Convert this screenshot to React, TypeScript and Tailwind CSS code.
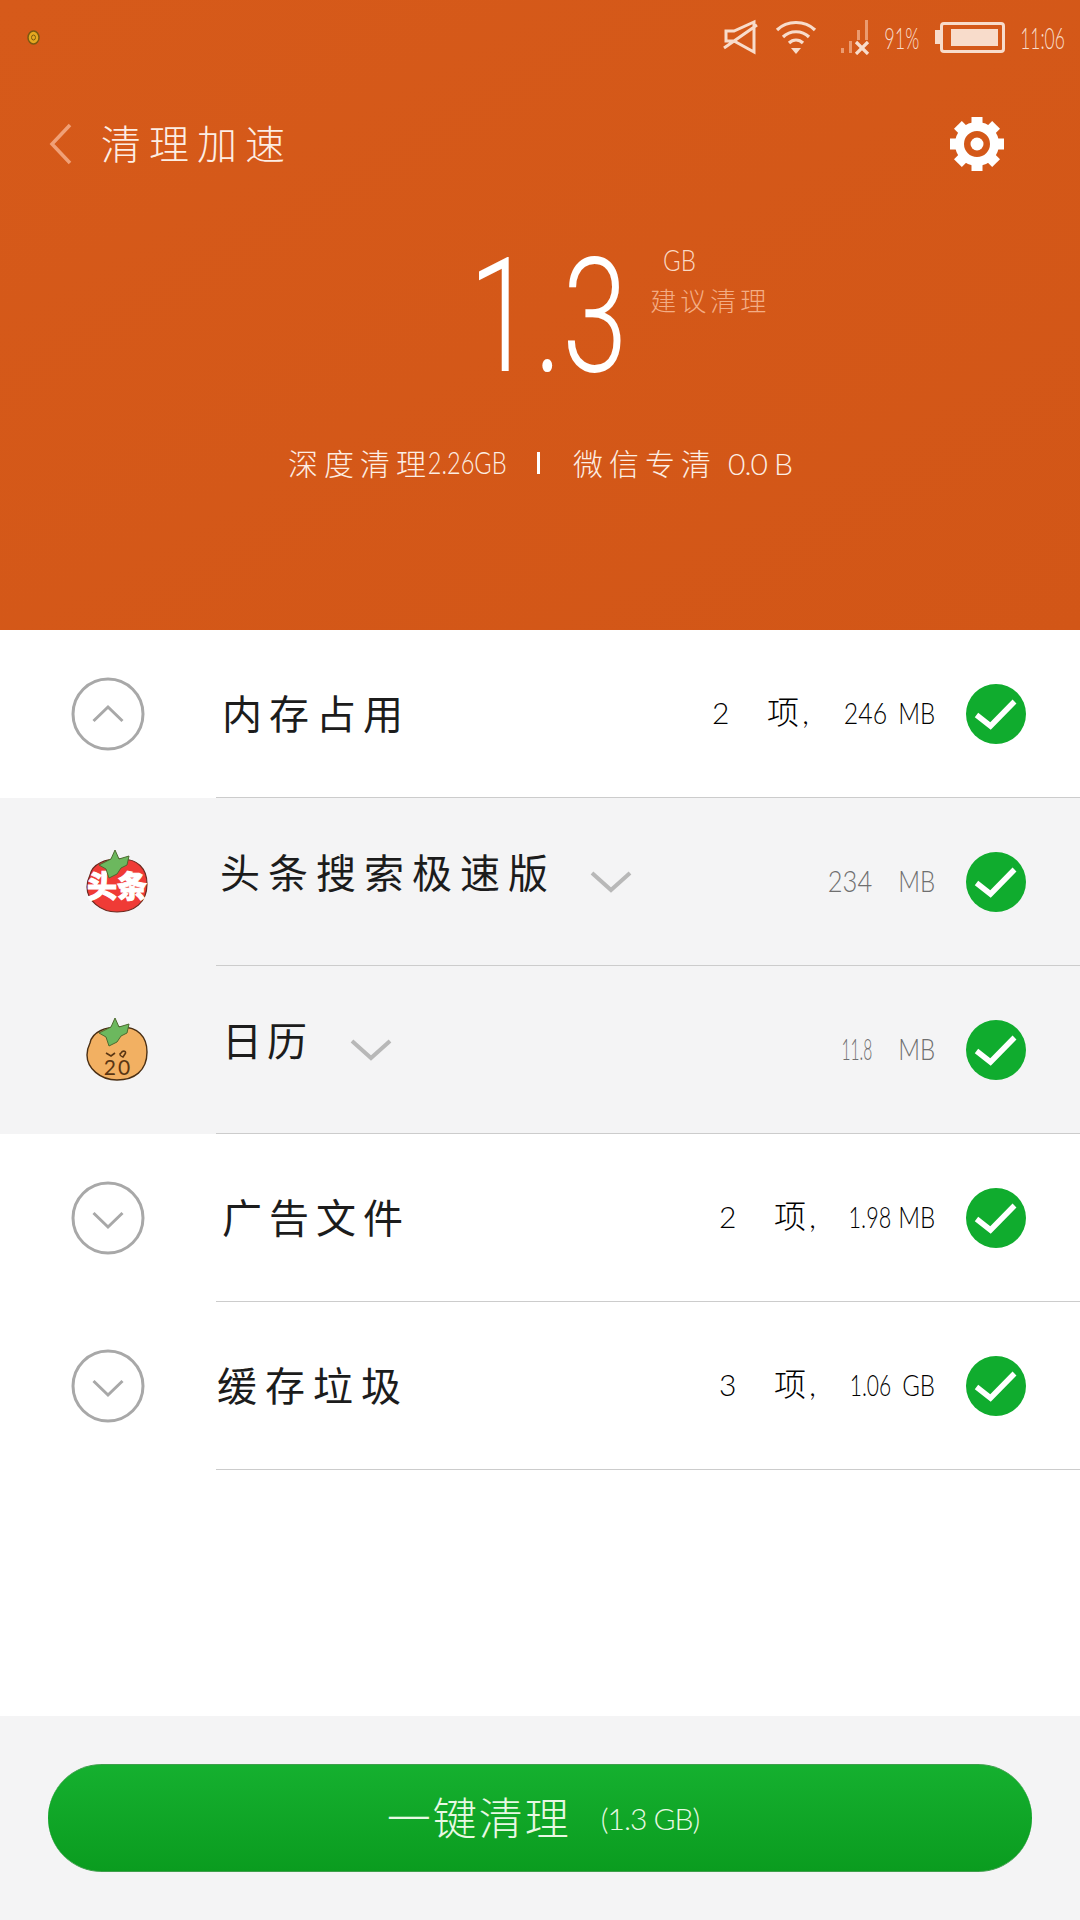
import React from 'react';

const Check = () => (
  <svg width="60" height="60" viewBox="0 0 60 60" className="shrink-0">
    <circle cx="30" cy="30" r="30" fill="#10ac2e" />
    <path d="M10.5 31 L24.5 42 L48.5 17.5" fill="none" stroke="#fff" strokeWidth="5.5" />
  </svg>
);

const CircleChevron = ({ up }: { up?: boolean }) => (
  <svg width="74" height="74" viewBox="0 0 74 74">
    <circle cx="37" cy="37" r="35" fill="none" stroke="#a8a8a8" strokeWidth="3" />
    <path d={up ? 'M22.5 44 L37 30 L51.5 44' : 'M22.5 32 L37 46 L51.5 32'} fill="none" stroke="#a8a8a8" strokeWidth="3" />
  </svg>
);

const SmallChevron = () => (
  <svg width="42" height="24" viewBox="0 0 42 24" className="shrink-0">
    <path d="M2 3 L21 20 L40 3" fill="none" stroke="#b8b8b8" strokeWidth="4" />
  </svg>
);

const Leaf = () => (
  <path
    d="M31 3 L35 12 L45 9 L43 18 L37 21 L33 27 L25 31 L22 22 L15 18 L27 12 Z"
    fill="#6cb85e"
    stroke="#4d6b2f"
    strokeWidth="1"
  />
);

const BODY = 'M6 28 C8 17 22 11 38 12 C53 12 63 21 63 37 C63 56 50 65 33 65 C16 65 3 53 3 40 C3 35 4 32 6 28 Z';

const TomatoRed = () => (
  <svg width="66" height="70" viewBox="0 0 66 70">
    <path d={BODY} fill="#ef3b36" stroke="#6b2a20" strokeWidth="1.2" />
    <text x="3" y="50" fontSize="30" fontWeight="900" fill="#fff" stroke="#fff" strokeWidth="1" fontFamily="'Noto Sans CJK SC', sans-serif">头条</text>
    <Leaf />
  </svg>
);

const TomatoOrange = () => (
  <svg width="66" height="70" viewBox="0 0 66 70">
    <path d={BODY} fill="#f2b062" stroke="#4a2f14" strokeWidth="1.4" />
    <Leaf />
    <text x="34" y="60" textAnchor="middle" fontSize="21" letterSpacing="2" fontWeight="400" fill="#5a3613" fontFamily="'Lato', sans-serif">20</text>
    <path d="M22 38 L27 41 L31 38 M37 38 C39 35 43 36 41 39 L39 42 C36 41 35 39 37 38 Z" fill="none" stroke="#5a3613" strokeWidth="1.6" />
  </svg>
);

const Gear = () => (
  <svg width="56" height="56" viewBox="0 0 56 56">
    {[0, 45, 90, 135, 180, 225, 270, 315].map((a) => (
      <rect key={a} x="22.5" y="1" width="11" height="12" fill="#fff" transform={`rotate(${a} 28 28)`} />
    ))}
    <circle cx="28" cy="28" r="17.5" fill="none" stroke="#fff" strokeWidth="9" />
    <circle cx="28" cy="28" r="6.5" fill="#fff" />
  </svg>
);

// the reference's digits are much narrower than any installed face, so squeeze them
const Narrow = ({ w, cls, children }: { w: string; cls: string; children: React.ReactNode }) => (
  <span className={`flex justify-end shrink-0 ${w}`}>
    <span className={`shrink-0 whitespace-nowrap origin-right ${cls}`}>{children}</span>
  </span>
);

const StatusIcons = () => (
  <div className="flex items-center text-[#f8dccb]">
    <svg width="36" height="36" viewBox="0 0 36 36" className="mr-[16px]">
      <path d="M3 12 H11 L31 3 V33 L11 22 H3 Z M1 29 L34 6" fill="none" stroke="#f8dccb" strokeWidth="3" />
    </svg>
    <svg width="42" height="36" viewBox="0 0 42 36" className="mr-[24px]">
      <path d="M2 11 C12 1 30 1 40 11 M8 18 C15 11 27 11 34 18 M14 24 C18 20 24 20 28 24" fill="none" stroke="#f8dccb" strokeWidth="3.2" />
      <path d="M16 29 H26 L21 35 Z" fill="#f8dccb" />
    </svg>
    <svg width="30" height="36" viewBox="0 0 30 36" className="mr-[14px]">
      <rect x="0" y="29" width="3" height="5" fill="#eb9b70" />
      <rect x="8" y="22" width="3" height="12" fill="#eb9b70" />
      <rect x="16" y="11" width="3" height="10" fill="#eb9b70" />
      <rect x="24" y="1" width="3" height="20" fill="#eb9b70" />
      <path d="M15 23 L27 35 M27 23 L15 35" stroke="#f8dccb" strokeWidth="3.2" />
    </svg>
    <Narrow w="w-[34px]" cls="text-[30px] leading-none font-light scale-x-[0.6]">91%</Narrow>
    <div className="relative flex items-center ml-[16px] mr-[15px]">
      <div className="w-[5px] h-[14px] bg-[#f8dccb]" />
      <div className="w-[65px] h-[31px] rounded-[4px] border-[3px] border-[#f8dccb] p-[4px] pl-[8px]">
        <div className="w-full h-full bg-[#f8dccb]" />
      </div>
    </div>
    <Narrow w="w-[45px]" cls="text-[30px] leading-none font-light scale-x-[0.58]">11:06</Narrow>
  </div>
);

interface RowProps {
  left: React.ReactNode;
  title: string;
  titleClass?: string;
  leftClass?: string;
  chevron?: boolean;
  gray?: boolean;
  right: React.ReactNode;
}

const Row: React.FC<RowProps> = ({ left, title, titleClass = '', leftClass = '', chevron, gray, right }) => (
  <div className={`flex h-[168px] ${gray ? 'bg-[#f4f4f5]' : 'bg-white'}`}>
    <div className={`w-[216px] shrink-0 flex items-center justify-center ${leftClass}`}>{left}</div>
    <div className="flex-1 flex items-center border-b-[1.5px] border-[#cccccc] pr-[54px]">
      <span className={`text-[40px] leading-none font-normal text-[#1c1c1c] ${titleClass}`}>{title}</span>
      {chevron && <div className="ml-[34px]"><SmallChevron /></div>}
      <div className="flex-1 flex items-center justify-end mr-[31px] mt-[-3px]">{right}</div>
      <Check />
    </div>
  </div>
);

interface CountProps {
  n: string;
  size: string;
  sizeW: string;
  sizeCls: string;
  sizeGap: string;
  unitGap: string;
  unit: string;
}

const Count = ({ n, size, sizeW, sizeCls, sizeGap, unitGap, unit }: CountProps) => (
  <div className="flex items-center text-[#000000] text-[30px] leading-none font-light">
    <span className="w-[15px]">{n}</span>
    <span className="ml-[40px] text-[32px] w-[40px] tracking-[3px] whitespace-nowrap">项,</span>
    <span className={sizeGap}><Narrow w={sizeW} cls={sizeCls}>{size}</Narrow></span>
    <span className={unitGap}><Narrow w="w-[34px]" cls="scale-x-[0.8]">{unit}</Narrow></span>
  </div>
);

const Size = ({ size, sizeW, sizeCls }: { size: string; sizeW: string; sizeCls: string }) => (
  <div className="flex items-center text-[#6f6f6f] text-[30px] leading-none font-light">
    <Narrow w={sizeW} cls={sizeCls}>{size}</Narrow>
    <span className="ml-[29px]"><Narrow w="w-[34px]" cls="scale-x-[0.8]">MB</Narrow></span>
  </div>
);

export default function App() {
  return (
    <div className="w-[1080px] h-[1920px] flex flex-col bg-white overflow-hidden font-['Lato','Noto_Sans_CJK_SC',sans-serif]">
      <div className="h-[630px] shrink-0 flex flex-col bg-gradient-to-br from-[#d65a1a] to-[#d25617] text-white">
        <div className="flex items-center justify-between h-[73px] pt-[1px] pl-[27px] pr-[15px]">
          <svg width="13" height="15" viewBox="0 0 13 15">
            <ellipse cx="6.5" cy="7.5" rx="5.5" ry="6.5" fill="#e6a820" stroke="#7a5a10" strokeWidth="1.5" />
            <ellipse cx="6.5" cy="7.5" rx="2" ry="2.5" fill="none" stroke="#7a5a10" strokeWidth="1" />
          </svg>
          <StatusIcons />
        </div>
        <div className="flex items-center h-[142px] pl-[48px] pr-[75px]">
          <svg width="24" height="42" viewBox="0 0 24 42" className="shrink-0">
            <path d="M22 2 L4 21 L22 40" fill="none" stroke="#f0a077" strokeWidth="3.5" />
          </svg>
          <span className="ml-[29px] text-[40px] leading-none tracking-[8px] font-light text-[#fdeee4]">清理加速</span>
          <div className="ml-auto"><Gear /></div>
        </div>
        <div className="flex justify-center h-[165px] mt-[27px] pl-[103px]">
          <span className="text-[159px] leading-[150px] font-['Roboto',sans-serif] font-light scale-x-[0.74] origin-right">1.3</span>
          <div className="flex flex-col items-start ml-[23px]">
            <span className="text-[30px] leading-none mt-[2px] ml-[9px] font-light scale-x-[0.8] text-[#fbd9c4]">GB</span>
            <span className="text-[26px] leading-none mt-[14px] tracking-[4px] font-light text-[#f3ad85]">建议清理</span>
          </div>
        </div>
        <div className="flex items-center justify-center mt-[40px] text-[30px] leading-none font-light text-[#fdeee4]">
          <span className="tracking-[6px]">深度清理</span>
          <Narrow w="w-[75px]" cls="text-[31px] scale-x-[0.76]">2.26GB</Narrow>
          <span className="w-[3px] h-[22px] bg-white ml-[30px] mr-[33px]" />
          <span className="tracking-[6px]">微信专清</span>
          <span className="ml-[11px] tracking-[-1px]">0.0 B</span>
        </div>
      </div>

      <Row left={<CircleChevron up />} title="内存占用" titleClass="ml-[6px] tracking-[7px]" right={<Count n="2" size="246" sizeW="w-[42px]" sizeCls="scale-x-[0.83]" sizeGap="ml-[38px]" unitGap="ml-[14px]" unit="MB" />} />
      <Row gray left={<TomatoRed />} leftClass="pl-[18px]" title="头条搜索极速版" titleClass="ml-[4px] mt-[-18px] tracking-[8px]" chevron right={<Size size="234" sizeW="w-[43px]" sizeCls="scale-x-[0.85]" />} />
      <Row gray left={<TomatoOrange />} leftClass="pl-[18px]" title="日历" titleClass="ml-[6px] mr-[4px] mt-[-18px] tracking-[5px]" chevron right={<Size size="11.8" sizeW="w-[30px]" sizeCls="scale-x-[0.52]" />} />
      <Row left={<CircleChevron />} title="广告文件" titleClass="ml-[6px] tracking-[7px]" right={<Count n="2" size="1.98" sizeW="w-[40px]" sizeCls="scale-x-[0.72]" sizeGap="ml-[37px]" unitGap="ml-[10px]" unit="MB" />} />
      <Row left={<CircleChevron />} title="缓存垃圾" titleClass="ml-[1px] tracking-[8px]" right={<Count n="3" size="1.06" sizeW="w-[38px]" sizeCls="scale-x-[0.7]" sizeGap="ml-[39px]" unitGap="ml-[10px]" unit="GB" />} />

      <div className="flex-1 bg-white" />

      <div className="h-[204px] shrink-0 bg-[#f4f4f5] px-[48px] pt-[48px]">
        <div className="h-[108px] pl-[6px] rounded-full bg-gradient-to-b from-[#15b02f] to-[#0a9c1f] border-y border-[#3f9f4c] flex items-center justify-center text-[#e8f9e4]">
          <span className="text-[44px] leading-none tracking-[2px] font-light">一键清理</span>
          <span className="ml-[30px] text-[30px] leading-none font-light tracking-[-1px]">(1.3 GB)</span>
        </div>
      </div>
    </div>
  );
}
